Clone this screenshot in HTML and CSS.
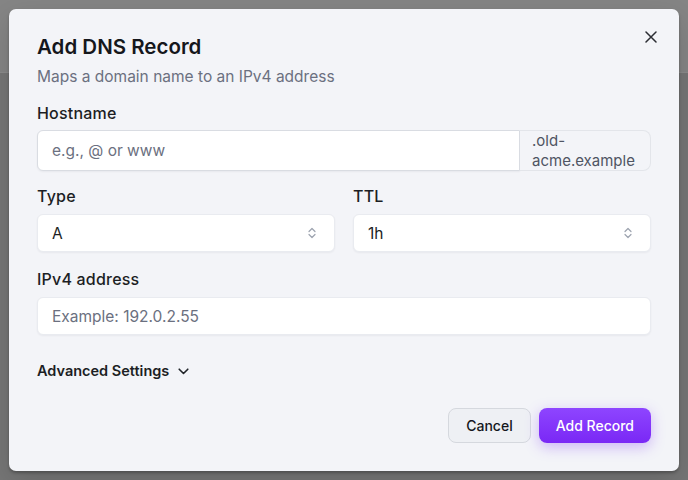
FILE: index.html
```html
<!DOCTYPE html>
<html lang="en">
<head>
<meta charset="utf-8">
<title>Add DNS Record</title>
<link rel="stylesheet" href="styles.css">
</head>
<body>
<div class="page">
  <header class="topbar"></header>
  <div class="overlay">
    <div class="dialog" role="dialog" aria-labelledby="dlg-title">
      <button class="close" aria-label="Close">
        <svg width="12" height="12" viewBox="0 0 12 12"><path d="M1 1 L11 11 M11 1 L1 11" stroke="#2b2d33" stroke-width="1.5" stroke-linecap="round" fill="none"/></svg>
      </button>
      <h2 class="title" id="dlg-title">Add DNS Record</h2>
      <p class="subtitle">Maps a domain name to an IPv4 address</p>

      <div class="field field-host">
        <label class="label">Hostname</label>
        <div class="host-row">
          <div class="input host-input"><span class="placeholder">e.g., @ or www</span></div>
          <div class="suffix">.old-acme.example</div>
        </div>
      </div>

      <div class="grid-two">
        <div class="field field-type">
          <label class="label">Type</label>
          <div class="input select">
            <span class="value">A</span>
            <svg class="updown" width="8" height="12" viewBox="0 0 8 12"><path d="M1 4.5 L4 1.5 L7 4.5 M1 7.5 L4 10.5 L7 7.5" stroke="#9ca3af" stroke-width="1.2" fill="none" stroke-linecap="round" stroke-linejoin="round"/></svg>
          </div>
        </div>
        <div class="field field-type">
          <label class="label">TTL</label>
          <div class="input select">
            <span class="value">1h</span>
            <svg class="updown" width="8" height="12" viewBox="0 0 8 12"><path d="M1 4.5 L4 1.5 L7 4.5 M1 7.5 L4 10.5 L7 7.5" stroke="#9ca3af" stroke-width="1.2" fill="none" stroke-linecap="round" stroke-linejoin="round"/></svg>
          </div>
        </div>
      </div>

      <div class="field field-ip">
        <label class="label">IPv4 address</label>
        <div class="input"><span class="placeholder">Example: 192.0.2.55</span></div>
      </div>

      <button class="advanced">Advanced Settings
        <svg width="11" height="7" viewBox="0 0 11 7"><path d="M1.2 1.2 L5.5 5.5 L9.8 1.2" stroke="#1f2328" stroke-width="1.6" fill="none" stroke-linecap="round" stroke-linejoin="round"/></svg>
      </button>

      <div class="actions">
        <button class="btn btn-cancel">Cancel</button>
        <button class="btn btn-primary">Add Record</button>
      </div>
    </div>
  </div>
</div>
</body>
</html>
```

FILE: styles.css
```css
* { box-sizing: border-box; }
html, body { margin: 0; padding: 0; }
body {
  font-family: Inter, "Noto Sans", "Liberation Sans", sans-serif;
  color: #1f2328;
}
.page {
  position: relative;
  width: 688px;
  height: 480px;
  background: #767676;
  overflow: hidden;
}
.topbar {
  height: 73px;
  background: #858585;
  border-bottom: 1px solid #8c8c8c;
}
.overlay {
  position: absolute;
  inset: 0;
  padding: 9px;
  display: flex;
}
.dialog {
  position: relative;
  flex: 1;
  background: #f3f4f8;
  border-radius: 7px;
  padding: 26px 28px 27px;
  box-shadow: 0 2px 3px rgba(0,0,0,0.25), 0 10px 30px rgba(0,0,0,0.15);
}
.close {
  position: absolute;
  top: 18px;
  right: 18px;
  width: 20px;
  height: 20px;
  padding: 0;
  border: 0;
  background: transparent;
  display: flex;
  align-items: center;
  justify-content: center;
}
.title {
  margin: 0;
  font-size: 20.5px;
  line-height: 24px;
  font-weight: 600;
  color: #15171c;
}
.subtitle {
  margin: 7px 0 0;
  font-size: 15.5px;
  line-height: 22px;
  color: #6b7080;
}
.field { display: flex; flex-direction: column; }
.label {
  font-size: 16px;
  line-height: 24px;
  font-weight: 500;
  letter-spacing: 0.2px;
  color: #1c1e24;
  margin-bottom: 6px;
}
.field-host { margin-top: 13px; }
.field-host .label { margin-bottom: 5px; }
.grid-two {
  display: grid;
  grid-template-columns: 1fr 1fr;
  gap: 18px;
  margin-top: 13px;
}
.field-ip { margin-top: 15px; }
.input {
  height: 38px;
  background: #ffffff;
  border: 1px solid #e9ebf0;
  border-radius: 6px;
  padding: 0 14px;
  display: flex;
  align-items: center;
  font-size: 15.5px;
  box-shadow: 0 1px 2px rgba(16,24,40,0.05);
}
.placeholder { color: #6b7080; }
.value { color: #1c1e24; flex: 1; }
.select { padding-right: 18px; }
.host-row {
  display: flex;
  height: 41px;
}
.host-input {
  flex: 1;
  height: 41px;
  border: 1px solid #d9dce2;
  border-radius: 6px 0 0 6px;
}
.suffix {
  width: 131px;
  flex: none;
  border: 1px solid #e3e5ea;
  border-left: 0;
  border-radius: 0 8px 8px 0;
  padding: 0 12px;
  font-size: 15px;
  line-height: 19.5px;
  color: #4f5563;
  background: #f3f4f8;
}
.advanced {
  margin-top: 24px;
  padding: 0;
  border: 0;
  background: transparent;
  font-family: inherit;
  font-size: 14.5px;
  line-height: 24px;
  font-weight: 600;
  color: #1c1e24;
  display: flex;
  align-items: center;
  gap: 9px;
}
.actions {
  margin-top: 25px;
  display: flex;
  justify-content: flex-end;
  gap: 8px;
}
.btn {
  height: 35px;
  padding: 0 17px;
  border-radius: 8px;
  font-family: inherit;
  font-size: 14px;
  font-weight: 500;
}
.btn-cancel {
  background: #eef0f4;
  border: 1px solid #d5d8de;
  color: #15171c;
}
.btn-primary {
  border: 0;
  color: #ffffff;
  background: linear-gradient(180deg, #8e45ff 0%, #7a28f5 100%);
  box-shadow: 0 4px 14px rgba(130, 60, 245, 0.35);
}
```
